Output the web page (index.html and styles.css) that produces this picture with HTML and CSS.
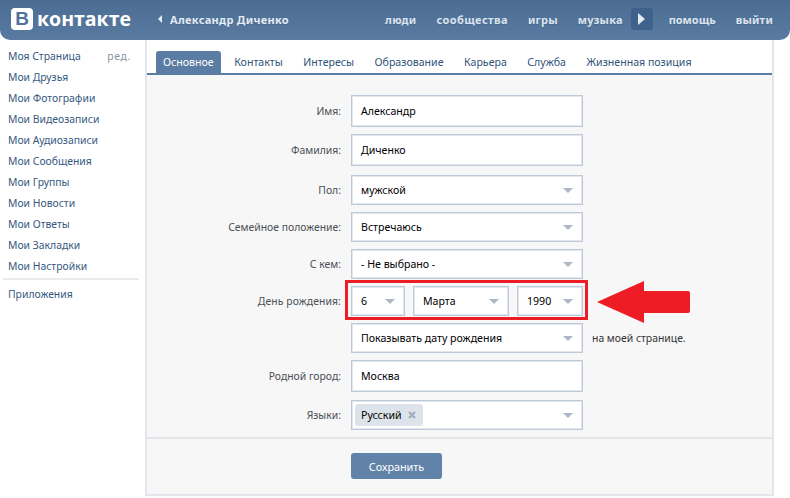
FILE: index.html
```html
<!DOCTYPE html>
<html lang="ru">
<head>
<meta charset="utf-8">
<title>ВКонтакте</title>
<link rel="stylesheet" href="styles.css">
</head>
<body>
<header class="top">
  <div class="logo"><span class="logo-b">В</span><span class="logo-t">контакте</span></div>
  <div class="user"><span class="tri-l"></span><span>Александр Диченко</span></div>
  <nav class="nav">
    <a class="n-1">люди</a><a class="n-2 n-wide">сообщества</a><a class="n-2">игры</a><a class="n-2">музыка</a>
    <span class="more"><span class="tri-r"></span></span>
    <a class="n-3">помощь</a><a class="n-2">выйти</a>
  </nav>
</header>
<div class="page">
  <aside class="side">
    <div class="side-first"><a>Моя Страница</a><span class="edit">ред.</span></div>
    <a>Мои Друзья</a>
    <a>Мои Фотографии</a>
    <a>Мои Видеозаписи</a>
    <a>Мои Аудиозаписи</a>
    <a>Мои Сообщения</a>
    <a>Мои Группы</a>
    <a>Мои Новости</a>
    <a>Мои Ответы</a>
    <a>Мои Закладки</a>
    <a>Мои Настройки</a>
    <div class="side-sep"></div>
    <a>Приложения</a>
  </aside>
  <main class="main">
    <div class="tabs">
      <a class="tab active">Основное</a><a class="tab">Контакты</a><a class="tab">Интересы</a><a class="tab">Образование</a><a class="tab">Карьера</a><a class="tab">Служба</a><a class="tab">Жизненная позиция</a>
    </div>
    <div class="panel">
      <form class="form">
        <div class="row r-input"><label>Имя:</label><div class="field input">Александр</div></div>
        <div class="row r-input r-gap"><label>Фамилия:</label><div class="field input">Диченко</div></div>
        <div class="row"><label>Пол:</label><div class="field select"><span>мужской</span><i class="dd"></i></div></div>
        <div class="row"><label>Семейное положение:</label><div class="field select"><span>Встречаюсь</span><i class="dd"></i></div></div>
        <div class="row"><label>С кем:</label><div class="field select"><span>- Не выбрано -</span><i class="dd"></i></div></div>
        <div class="row r-date"><label>День рождения:</label>
          <div class="dates">
            <div class="field select d-day"><span>6</span><i class="dd"></i></div>
            <div class="field select d-month"><span>Марта</span><i class="dd"></i></div>
            <div class="field select d-year"><span>1990</span><i class="dd"></i></div>
          </div>
          <div class="redbox"></div>
          <svg class="arrow" width="93" height="42" viewBox="0 0 93 42"><path d="M0 21 47 0V10H91Q93 10 93 12V30Q93 32 91 32H47V42Z" fill="#ee1c25"/></svg>
        </div>
        <div class="row r-show"><label></label><div class="field select"><span>Показывать дату рождения</span><i class="dd"></i></div><span class="note">на моей странице.</span></div>
        <div class="row r-input r-city"><label>Родной город:</label><div class="field input">Москва</div></div>
        <div class="row r-lang"><label>Языки:</label><div class="field select"><span class="chip">Русский<svg class="x" width="8" height="8" viewBox="0 0 8 8"><path d="M1 1 7 7M7 1 1 7" stroke="#a3adbd" stroke-width="2.4"/></svg></span><i class="dd"></i></div></div>
      </form>
      <div class="actions"><button class="save" type="button">Сохранить</button></div>
    </div>
  </main>
</div>
</body>
</html>
```
FILE: styles.css
```css
* { box-sizing: border-box; }
html, body { margin: 0; padding: 0; }
body {
  width: 790px; height: 498px; overflow: hidden; background: #fff;
  font-family: "Noto Sans", "DejaVu Sans", sans-serif; font-size: 10.4px; color: #000;
}
a { color: #2b587a; }

.top {
  height: 40px; display: flex; align-items: center; position: relative;
  background: linear-gradient(#4b6c93, #5a7ba1);
  border-radius: 0 0 10px 10px; color: #e3ebf3; font-weight: 700; font-size: 11px;
  text-shadow: 0 1px 0 #48688c;
}
.logo { display: flex; align-items: center; margin-left: 11px; width: 147px; height: 40px; padding-bottom: 3px; }
.logo-b {
  width: 22px; height: 22px; background: #fff; color: #50729b; border-radius: 4px;
  display: flex; align-items: center; justify-content: center;
  font: 700 19px "Liberation Sans", sans-serif; text-shadow: none;
}
.logo-t { margin-left: 4px; color: #fff; font: 700 19.5px "Open Sans", sans-serif; text-shadow: none; line-height: 22px; }
.user { display: flex; align-items: center; gap: 8px; padding-bottom: 2px; letter-spacing: 0.3px; }
.tri-l { border: 4px solid transparent; border-left: 0; border-right-color: #e3ebf3; }
.tri-r { border: 6px solid transparent; border-right: 0; border-left: 7px solid #e3ebf3; }
.nav { margin-left: auto; margin-right: 17px; display: flex; align-items: center; height: 40px; padding-bottom: 2px; letter-spacing: 0.2px; }
.nav a { color: #dbe4ee; }
.n-2 { margin-left: 20px; }
.n-wide { letter-spacing: 0.4px; }
.n-3 { margin-left: 16px; letter-spacing: 0; }
.more {
  width: 22px; height: 22px; margin-left: 8px; background: #3f628c; border-radius: 3px;
  display: flex; align-items: center; justify-content: center;
}

.page { display: flex; height: 458px; }
.side { width: 145px; padding: 6px 6px 0 8px; display: flex; flex-direction: column; }
.side a { display: block; height: 21px; line-height: 20px; color: #36587f; }
.side-first { display: flex; justify-content: space-between; padding-right: 8px; }
.edit { line-height: 20px; color: #8a95a3; letter-spacing: 0.6px; }
.side-sep { height: 2px; background: #e9ecef; margin: 1px 0 4px -5px; }

.main { width: 629px; border: solid #e3e7ec; border-width: 0 2px 2px 2px; margin-bottom: 2px; display: flex; flex-direction: column; }
.tabs { height: 35px; padding: 11px 0 0 9px; display: flex; border-bottom: 2px solid #5b7ca3; background: #fff; font-size: 10.6px; }
.tab { height: 22px; line-height: 23px; padding: 0 7px; margin-right: 6.5px; color: #2f5379; border-radius: 3px 3px 0 0; }
.tab.active { background: #5b7ca3; color: #fff; }
.panel { flex: 1; background: #f7f7f7; display: flex; flex-direction: column; }

.form { padding: 20px 0 0 0; height: 364px; border-bottom: 2px solid #e3e7ec; }
.row { display: flex; align-items: center; height: 30px; margin-bottom: 7px; position: relative; }
.row label { width: 194px; margin-right: 10px; text-align: right; color: #4a4f55; flex: none; }
.r-date label { letter-spacing: 0.1px; }
.r-input { height: 32px; }
.r-gap { margin-bottom: 9px; }
.r-city { margin-bottom: 8px; }
.field {
  width: 232px; height: 100%; border: 1px solid #bdc9d8; box-shadow: inset 0 0 0 1px #e2e7ee;
  background: #fff; display: flex; align-items: center; padding-left: 9px; flex: none; font-size: 10.6px;
}
.select { justify-content: space-between; padding-right: 9px; }
.dd { width: 0; height: 0; border: 5px solid transparent; border-bottom: 0; border-top: 5px solid #aeb7c4; flex: none; }
.dates { display: flex; gap: 8px; width: 232px; height: 100%; }
.d-day { width: 54px; }
.d-month { width: 96px; }
.d-year { width: 66px; }
.redbox { position: absolute; left: 198px; top: -6px; width: 243px; height: 40px; border: 3px solid #ee1c25; }
.arrow { position: absolute; left: 450px; top: -5px; }
.note { margin-left: 9px; color: #333; }
.r-lang .field { padding-left: 3px; }
.chip { display: flex; align-items: center; gap: 6px; height: 22px; padding: 0 7px 0 6px; background: #dde3ea; border-radius: 3px; }
.x { display: block; }

.actions { padding: 14px 0 0 204px; }
.save { width: 91px; height: 26px; border: 0; border-radius: 3px; background: #6283a9; color: #fff; font: inherit; font-size: 10.8px; padding: 0; }
```
